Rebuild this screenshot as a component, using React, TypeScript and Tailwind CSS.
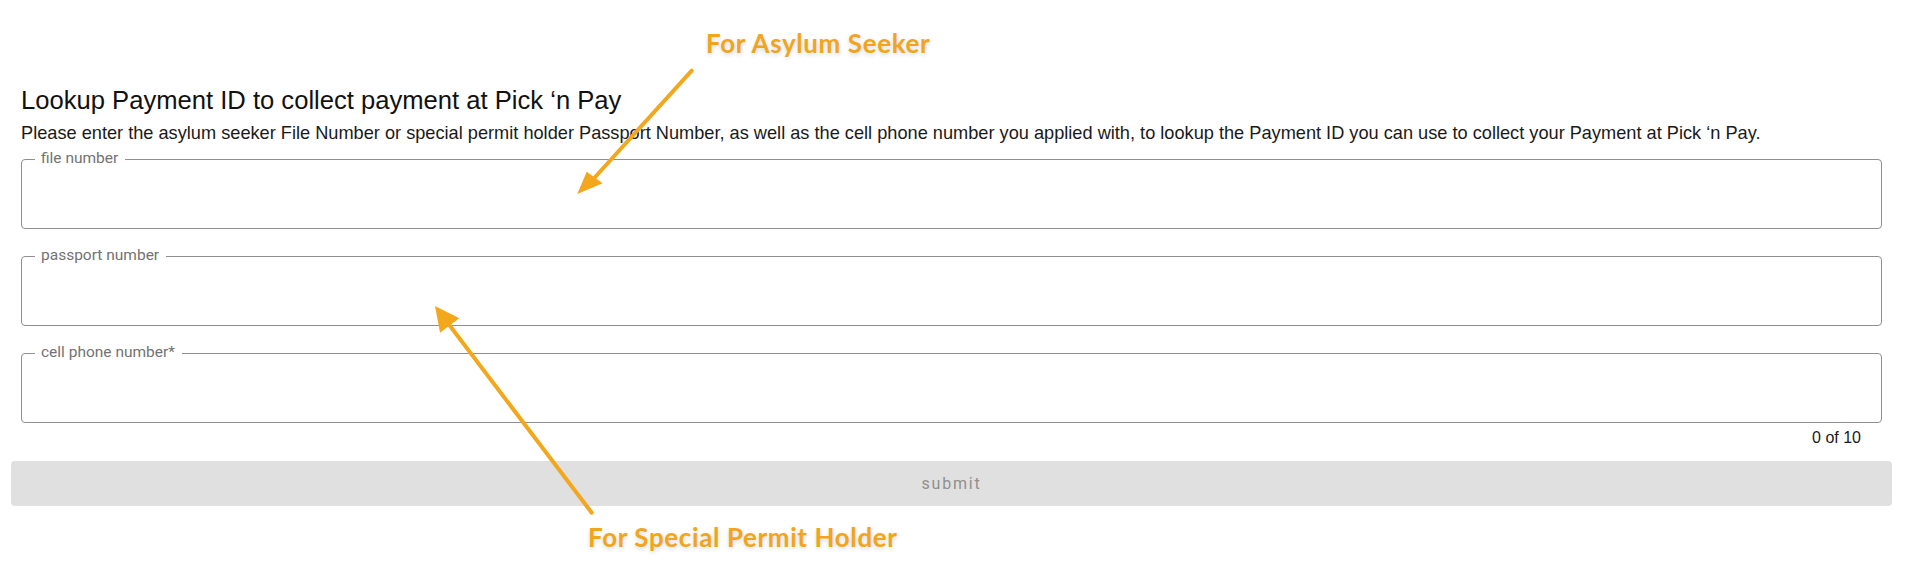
import React from "react";

function Field({ label }: { label: string }) {
  return (
    <div className="relative h-[70px] w-full rounded-[4px] border border-[#8f8f8f]">
      <span className="absolute left-[13px] top-[-11px] bg-white pl-[6px] pr-[7px] text-[15.5px] leading-[18px] text-[#737373] [font-family:Roboto,'Liberation_Sans',sans-serif]">
        {label}
      </span>
    </div>
  );
}

export default function App() {
  return (
    <div className="relative h-[572px] w-full overflow-hidden bg-white [font-family:'Liberation_Sans',Arial,sans-serif]">
      <div className="pl-[11px] pr-[13px] pt-[85px]">
        <div className="px-[10px]">
          <h1 className="text-[25.6px] font-normal leading-[30px] text-[#111]">
            Lookup Payment ID to collect payment at Pick ‘n Pay
          </h1>
          <p className="mt-[7px] whitespace-nowrap text-[18.2px] leading-[22px] text-[#1a1a1a]">
            Please enter the asylum seeker File Number or special permit holder Passport Number, as well as the cell phone
            number you applied with, to lookup the Payment ID you can use to collect your Payment at Pick ‘n Pay.
          </p>
          <div className="mt-[15px] flex flex-col gap-[27px]">
            <Field label="file number" />
            <Field label="passport number" />
            <Field label="cell phone number*" />
          </div>
          <div className="mt-[6px] pr-[21px] text-right text-[16px] leading-[18px] text-[#1a1a1a]">0 of 10</div>
        </div>
        <button
          type="button"
          disabled
          className="mt-[14px] flex h-[45px] w-full items-center justify-center rounded-[4px] bg-[#e0e0e0] text-[16px] tracking-[1.8px] text-[#8f8f8f] [font-family:Roboto,'Liberation_Sans',sans-serif]"
        >
          submit
        </button>
      </div>

      <svg
        className="pointer-events-none absolute left-0 top-0"
        width="1905"
        height="572"
        viewBox="0 0 1905 572"
      >
        <line x1="691.7" y1="70.7" x2="594.7" y2="177.5" stroke="#f3a71c" strokeWidth="4" strokeLinecap="round" />
        <polygon points="577.3,194 602.7,183.3 586.7,171.7" fill="#f3a71c" />
        <line x1="591.7" y1="512.7" x2="449.7" y2="325.5" stroke="#f3a71c" strokeWidth="4" strokeLinecap="round" />
        <polygon points="435,306 459.3,318.3 440,332.7" fill="#f3a71c" />
      </svg>

      <div className="pointer-events-none absolute left-[706px] top-[28px] whitespace-nowrap text-[26px] font-bold leading-[30px] tracking-[0.6px] text-[#f2a51c] [font-family:Lato,'Open_Sans',sans-serif] [text-shadow:0_2px_4px_rgba(0,0,0,0.15)]">
        For Asylum Seeker
      </div>
      <div className="pointer-events-none absolute left-[588px] top-[522px] whitespace-nowrap text-[26px] font-bold leading-[30px] tracking-[0.6px] text-[#f2a51c] [font-family:Lato,'Open_Sans',sans-serif] [text-shadow:0_2px_4px_rgba(0,0,0,0.15)]">
        For Special Permit Holder
      </div>
    </div>
  );
}
